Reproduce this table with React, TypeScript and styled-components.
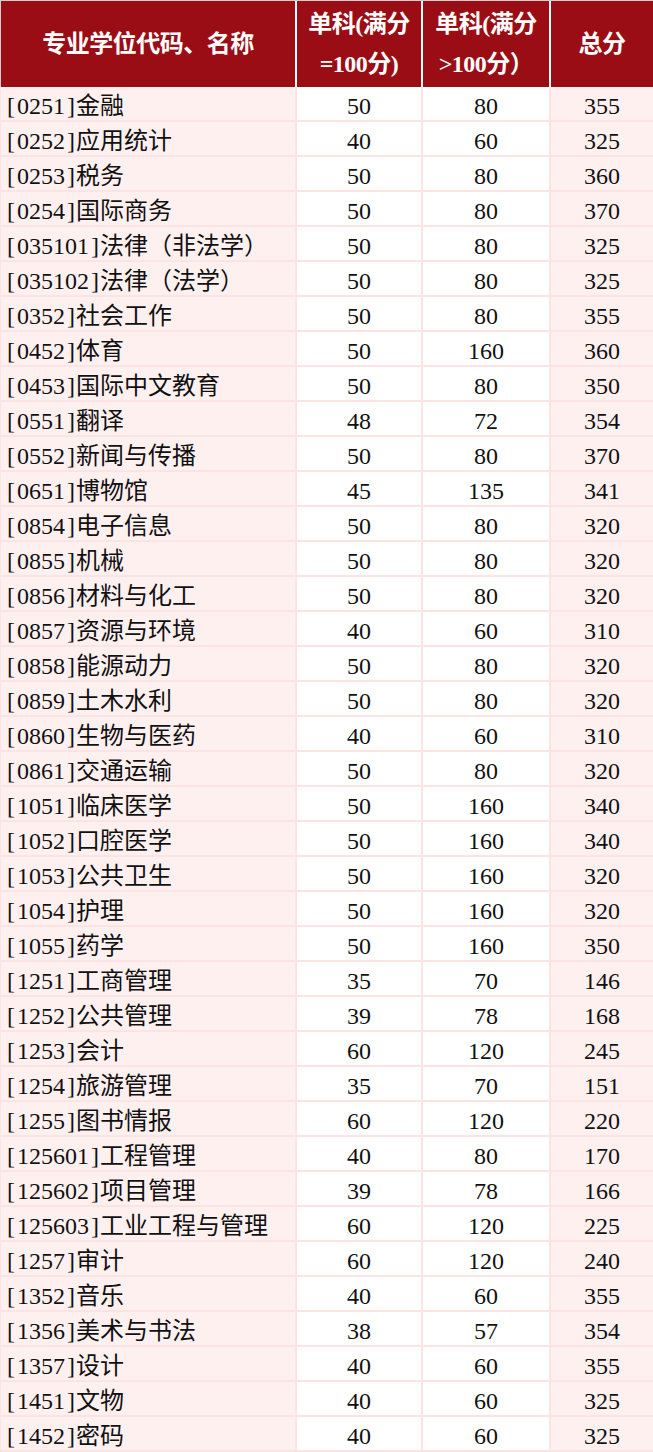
import React from 'react';
import styled, { createGlobalStyle } from 'styled-components';

const GlobalStyle = createGlobalStyle`
  body {
    margin: 0;
    background: #ffffff;
    font-family: "Liberation Serif", "Noto Sans CJK SC", serif;
  }
`;

const rows: [string, string, string, string][] = [
  ['[0251]金融', '50', '80', '355'],
  ['[0252]应用统计', '40', '60', '325'],
  ['[0253]税务', '50', '80', '360'],
  ['[0254]国际商务', '50', '80', '370'],
  ['[035101]法律（非法学）', '50', '80', '325'],
  ['[035102]法律（法学）', '50', '80', '325'],
  ['[0352]社会工作', '50', '80', '355'],
  ['[0452]体育', '50', '160', '360'],
  ['[0453]国际中文教育', '50', '80', '350'],
  ['[0551]翻译', '48', '72', '354'],
  ['[0552]新闻与传播', '50', '80', '370'],
  ['[0651]博物馆', '45', '135', '341'],
  ['[0854]电子信息', '50', '80', '320'],
  ['[0855]机械', '50', '80', '320'],
  ['[0856]材料与化工', '50', '80', '320'],
  ['[0857]资源与环境', '40', '60', '310'],
  ['[0858]能源动力', '50', '80', '320'],
  ['[0859]土木水利', '50', '80', '320'],
  ['[0860]生物与医药', '40', '60', '310'],
  ['[0861]交通运输', '50', '80', '320'],
  ['[1051]临床医学', '50', '160', '340'],
  ['[1052]口腔医学', '50', '160', '340'],
  ['[1053]公共卫生', '50', '160', '320'],
  ['[1054]护理', '50', '160', '320'],
  ['[1055]药学', '50', '160', '350'],
  ['[1251]工商管理', '35', '70', '146'],
  ['[1252]公共管理', '39', '78', '168'],
  ['[1253]会计', '60', '120', '245'],
  ['[1254]旅游管理', '35', '70', '151'],
  ['[1255]图书情报', '60', '120', '220'],
  ['[125601]工程管理', '40', '80', '170'],
  ['[125602]项目管理', '39', '78', '166'],
  ['[125603]工业工程与管理', '60', '120', '225'],
  ['[1257]审计', '60', '120', '240'],
  ['[1352]音乐', '40', '60', '355'],
  ['[1356]美术与书法', '38', '57', '354'],
  ['[1357]设计', '40', '60', '355'],
  ['[1451]文物', '40', '60', '325'],
  ['[1452]密码', '40', '60', '325'],
];

const COLUMNS = '294px 124px 126px 102px';

const Table = styled.div`
  width: 653px;
  display: flex;
  flex-direction: column;
`;

const Header = styled.div`
  display: grid;
  grid-template-columns: ${COLUMNS};
  column-gap: 2px;
  height: 86px;
  background: #ffffff;
  border-top: 1px solid #cfcfcf;
  border-left: 1px solid #cfcfcf;
`;

const HeadCell = styled.div`
  background: #9b0d14;
  color: #ffffff;
  font-weight: bold;
  font-size: 24px;
  line-height: 40px;
  display: flex;
  align-items: center;
  justify-content: center;
  text-align: center;
  letter-spacing: -0.5px;
`;

const Body = styled.div`
  display: grid;
  grid-template-columns: ${COLUMNS};
  grid-auto-rows: 33px;
  gap: 2px;
  padding: 0 0 2px 1px;
  background: #fde4e4;
`;

const Cell = styled.div<{ $tinted?: boolean; $left?: boolean }>`
  background: ${(p) => (p.$tinted ? '#fff0f0' : '#ffffff')};
  color: #111111;
  font-size: 24px;
  line-height: 33px;
  padding-top: 3px;
  box-sizing: border-box;
  white-space: nowrap;
  text-align: ${(p) => (p.$left ? 'left' : 'center')};
  padding-left: ${(p) => (p.$left ? '6px' : '0')};
  overflow: hidden;
`;

const Bracket = styled.span<{ $side: 'open' | 'close' }>`
  padding: ${(p) => (p.$side === 'open' ? '0 2px 0 0' : '0 1px 0 2px')};
`;

function Name({ text }: { text: string }) {
  const m = text.match(/^\[(\d+)\](.*)$/);
  if (!m) return <>{text}</>;
  return (
    <>
      <Bracket $side="open">[</Bracket>
      {m[1]}
      <Bracket $side="close">]</Bracket>
      {m[2]}
    </>
  );
}

export default function App() {
  return (
    <>
      <GlobalStyle />
      <Table>
        <Header>
          <HeadCell>专业学位代码、名称</HeadCell>
          <HeadCell>
            单科(满分
            <br />
            =100分)
          </HeadCell>
          <HeadCell>
            单科(满分
            <br />
            &gt;100分）
          </HeadCell>
          <HeadCell>总分</HeadCell>
        </Header>
        <Body>
          {rows.map(([name, a, b, total]) => (
            <React.Fragment key={name}>
              <Cell $tinted $left>
                <Name text={name} />
              </Cell>
              <Cell>{a}</Cell>
              <Cell>{b}</Cell>
              <Cell $tinted>{total}</Cell>
            </React.Fragment>
          ))}
        </Body>
      </Table>
    </>
  );
}
